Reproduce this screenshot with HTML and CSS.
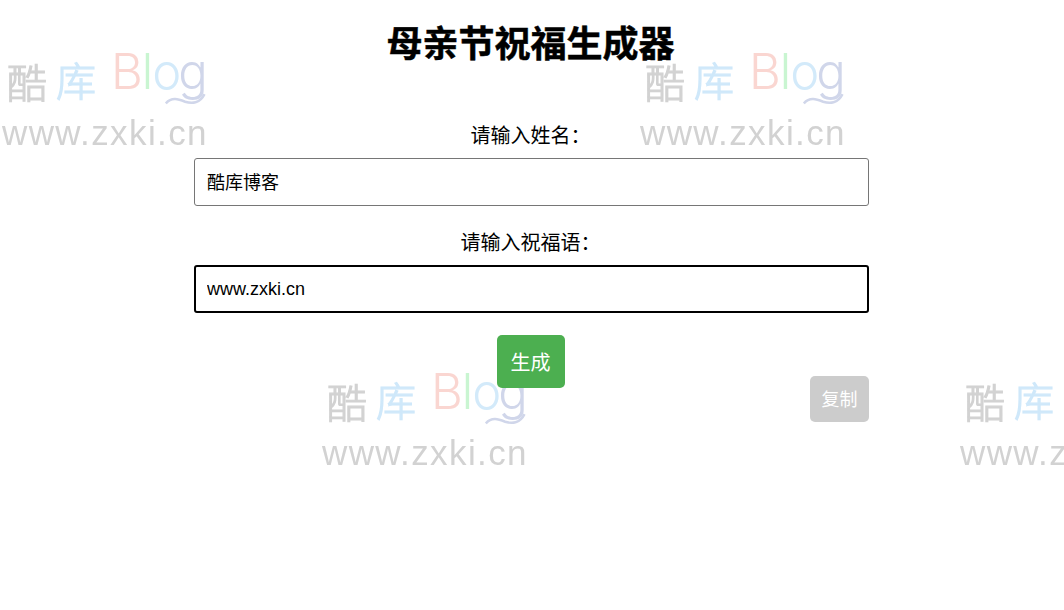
FILE: index.html
```html
<!DOCTYPE html>
<html lang="zh-CN">
<head>
<meta charset="utf-8">
<title>母亲节祝福生成器</title>
<link rel="stylesheet" href="styles.css">
</head>
<body>
<div class="watermarks" aria-hidden="true">
  <div class="stamp s1"><div class="logo"><span class="ku1">酷</span><span class="ku2">库</span><span class="b">B</span><span class="l">l</span><span class="o">o</span><span class="g">g</span></div><svg class="tail" viewBox="0 0 50 20"><path d="M1 17C8 9 16 12 24 15C33 18 42 16 47 6"/></svg><div class="url">www.zxki.cn</div></div>
  <div class="stamp s2"><div class="logo"><span class="ku1">酷</span><span class="ku2">库</span><span class="b">B</span><span class="l">l</span><span class="o">o</span><span class="g">g</span></div><svg class="tail" viewBox="0 0 50 20"><path d="M1 17C8 9 16 12 24 15C33 18 42 16 47 6"/></svg><div class="url">www.zxki.cn</div></div>
  <div class="stamp s3"><div class="logo"><span class="ku1">酷</span><span class="ku2">库</span><span class="b">B</span><span class="l">l</span><span class="o">o</span><span class="g">g</span></div><svg class="tail" viewBox="0 0 50 20"><path d="M1 17C8 9 16 12 24 15C33 18 42 16 47 6"/></svg><div class="url">www.zxki.cn</div></div>
  <div class="stamp s4"><div class="logo"><span class="ku1">酷</span><span class="ku2">库</span><span class="b">B</span><span class="l">l</span><span class="o">o</span><span class="g">g</span></div><svg class="tail" viewBox="0 0 50 20"><path d="M1 17C8 9 16 12 24 15C33 18 42 16 47 6"/></svg><div class="url">www.zxki.cn</div></div>
</div>
<main class="page">
  <h1 class="title">母亲节祝福生成器</h1>
  <form class="form">
    <label class="label" for="name">请输入姓名：</label>
    <input class="field" id="name" type="text" value="酷库博客">
    <label class="label label-second" for="wish">请输入祝福语：</label>
    <input class="field field-focus" id="wish" type="text" value="www.zxki.cn">
    <button class="generate" type="button">生成</button>
  </form>
  <div class="copy-row"><button class="copy" type="button">复制</button></div>
</main>
</body>
</html>
```

FILE: styles.css
```css
* { box-sizing: border-box; }
html, body { margin: 0; height: 100%; }
body {
  position: relative;
  overflow: hidden;
  background: #fff;
  color: #000;
  font-family: "Liberation Sans", "Noto Sans CJK SC", sans-serif;
}
.watermarks { position: absolute; inset: 0; overflow: hidden; }
.stamp { position: absolute; width: 215px; height: 110px; filter: blur(0.6px); }
.s1 { left: 0; top: 47px; }
.s2 { left: 638px; top: 47px; }
.s3 { left: 320px; top: 367px; }
.s4 { left: 958px; top: 367px; }
.logo { position: absolute; left: 7px; top: 0; display: flex; align-items: flex-end; height: 60px; white-space: nowrap; font-family: Inter, sans-serif; font-weight: 300; }
.ku1, .ku2 { font-family: "Noto Sans CJK SC", sans-serif; font-size: 40px; line-height: 48px; margin-right: 9px; -webkit-text-stroke: 1.2px currentColor; }
.ku1 { color: #d2d2d2; position: relative; top: -2px; }
.ku2 { color: #cfe8fa; margin-right: 15px; position: relative; top: -4px; }
.b, .l, .o, .g { font-size: 49px; line-height: 60px; position: relative; top: -5px; }
.b { color: #fad6d1; }
.l { color: #c9f5d1; margin-left: -1px; }
.o { color: #d3eafa; margin-left: -1px; }
.g { color: #d0d6ea; margin-left: -3px; }
.tail { position: absolute; left: 165px; top: 42px; width: 42px; height: 17px; fill: none; stroke: #d0d6ea; stroke-width: 3; }
.url { position: absolute; left: 2px; top: 66px; font-family: "Liberation Sans", sans-serif; font-size: 35px; line-height: 40px; letter-spacing: 1.4px; color: #d2d2d2; white-space: nowrap; }

.page { position: relative; width: 675px; margin-left: 194px; padding-top: 22px; }
.title { margin: 0 0 57px; padding-right: 2px; font-size: 36px; line-height: 46px; font-weight: 700; text-align: center; -webkit-text-stroke: 0.5px #000; }
.form { display: flex; flex-direction: column; align-items: center; }
.label { font-size: 20px; line-height: 23px; margin-bottom: 10px; margin-right: 2px; }
.label-second { margin-top: 26px; }
.field { display: block; width: 100%; height: 48px; padding: 0 12px 2px; border: 1px solid #767676; border-radius: 3px; background: #fff; color: #000; font: 18px "Liberation Sans", "Noto Sans CJK SC", sans-serif; }
.field-focus { border: 2px solid #000; padding: 0 11px; outline: none; }
.generate { margin-top: 22px; margin-right: 2px; width: 68px; height: 53px; padding: 0; border: 0; border-radius: 5px; background: #4caf50; color: #fff; font: 20px "Liberation Sans", "Noto Sans CJK SC", sans-serif; }
.copy-row { display: flex; justify-content: flex-end; margin-top: -12px; }
.copy { width: 59px; height: 46px; padding: 0 0 2px; border: 0; border-radius: 5px; background: #ccc; color: #fff; font: 18px "Liberation Sans", "Noto Sans CJK SC", sans-serif; }
```
